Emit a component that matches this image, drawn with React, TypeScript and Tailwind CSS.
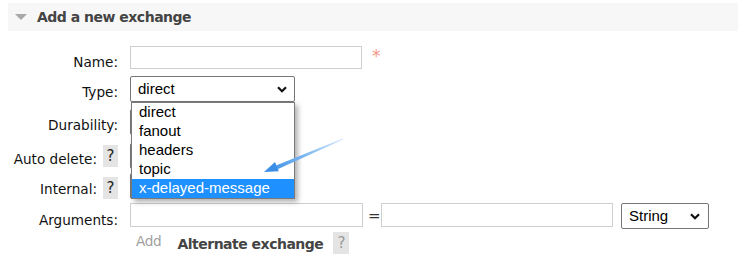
import React from "react";

const options = ["direct", "fanout", "headers", "topic", "x-delayed-message"];

function Chevron() {
  return (
    <svg width="10" height="7" viewBox="0 0 10 7" className="shrink-0">
      <path d="M1 1.2 L5 5.2 L9 1.2" fill="none" stroke="#111" strokeWidth="2.2" />
    </svg>
  );
}

function Help({ mt }: { mt: string }) {
  return (
    <span
      className={`${mt} ml-[6px] w-[15px] h-[22px] bg-[#e4e4e4] text-[#222] flex items-center justify-center text-[15px] leading-none`}
    >
      ?
    </span>
  );
}

export default function App() {
  return (
    <div
      className="relative w-[738px] h-[259px] overflow-hidden bg-white text-[#111] text-[13.6px]"
      style={{ fontFamily: '"DejaVu Sans", Verdana, sans-serif' }}
    >
      {/* section header */}
      <div className="mt-[3px] ml-[8px] h-[28px] bg-[#f7f7f7] flex items-center pl-[7px]">
        <svg width="12" height="6" viewBox="0 0 12 6">
          <path d="M0 0 L12 0 L6 6 Z" fill="#a8a8a8" />
        </svg>
        <h2 className="ml-[10px] text-[14px] font-bold tracking-[-0.5px] text-[#444] leading-none">
          Add a new exchange
        </h2>
      </div>

      <div className="pt-[15px]">
        {/* Name */}
        <div className="flex h-[30px] items-start">
          <div className="w-[118px] text-right leading-[20px] mt-[6px]">Name:</div>
          <div className="ml-[12px] w-[232px] h-[23px] border border-[#cfcfcf] bg-white" />
          <span className="ml-[10px] mt-[2px] text-[17px] leading-none text-[#f4988a]">*</span>
        </div>

        {/* Type */}
        <div className="flex h-[33px] items-start relative z-10">
          <div className="w-[118px] text-right leading-[20px] mt-[6px]">Type:</div>
          <div className="relative ml-[12px]">
            <div
              className="w-[165px] h-[26px] border border-[#767676] rounded-[2px] bg-white flex items-center justify-between pl-[7px] pr-[7px] text-[15px] text-black"
              style={{ fontFamily: '"Liberation Sans", Arial, sans-serif' }}
            >
              <span>direct</span>
              <Chevron />
            </div>
            <div
              className="absolute left-[1px] top-[26px] w-[164px] border border-[#7a7a7a] bg-white shadow-[3px_3px_5px_rgba(0,0,0,0.3)] text-[15px]"
              style={{ fontFamily: '"Liberation Sans", Arial, sans-serif' }}
            >
              {options.map((o) => (
                <div
                  key={o}
                  className={`h-[19px] leading-[18px] pl-[7px] ${
                    o === "x-delayed-message" ? "bg-[#1e90ff] text-white" : "text-black"
                  }`}
                >
                  {o}
                </div>
              ))}
            </div>
          </div>
        </div>

        {/* Durability */}
        <div className="flex h-[34px] items-start">
          <div className="w-[118px] text-right leading-[20px] mt-[6px]">Durability:</div>
          <div className="ml-[12px] w-[90px] h-[26px] border border-[#767676] rounded-[2px] bg-white" />
        </div>

        {/* Auto delete */}
        <div className="flex h-[30px] items-start">
          <div className="w-[118px] flex justify-end items-start">
            <span className="leading-[20px] mt-[6px]">Auto delete:</span>
            <Help mt="mt-[2px]" />
          </div>
          <div className="ml-[12px] w-[90px] h-[26px] border border-[#767676] rounded-[2px] bg-white" />
        </div>

        {/* Internal */}
        <div className="flex h-[30px] items-start">
          <div className="w-[118px] flex justify-end items-start">
            <span className="leading-[20px] mt-[6px]">Internal:</span>
            <Help mt="mt-[4px]" />
          </div>
          <div className="ml-[12px] w-[90px] h-[26px] border border-[#767676] rounded-[2px] bg-white" />
        </div>

        {/* Arguments */}
        <div className="flex h-[28px] items-start">
          <div className="w-[118px] text-right leading-[20px] mt-[7px]">Arguments:</div>
          <div className="ml-[12px] w-[233px] h-[24px] border border-[#cfcfcf] bg-white" />
          <span className="ml-[5px] w-[9px] mt-[3px] text-[15px] text-[#333] leading-[20px]">=</span>
          <div className="ml-[4px] w-[232px] h-[24px] border border-[#cfcfcf] bg-white" />
          <div
            className="ml-[8px] w-[88px] h-[26px] border border-[#767676] rounded-[2px] bg-white flex items-center justify-between pl-[7px] pr-[8px] text-[15px] text-black"
            style={{ fontFamily: '"Liberation Sans", Arial, sans-serif' }}
          >
            <span>String</span>
            <Chevron />
          </div>
        </div>

        {/* Add / Alternate exchange */}
        <div className="flex items-start pl-[136px]">
          <span className="leading-[20px] text-[#a0a0a0] tracking-[-0.3px]">Add</span>
          <span className="ml-[16px] mt-[3px] leading-[20px] text-[14px] font-bold tracking-[-0.5px] text-[#444]">
            Alternate exchange
          </span>
          <span className="ml-[10px] mt-[1px] w-[16px] h-[22px] bg-[#e4e4e4] text-[#999] text-[15px] flex items-center justify-center leading-none">
            ?
          </span>
        </div>
      </div>

      {/* annotation arrow */}
      <svg className="absolute inset-0 pointer-events-none z-20" width="738" height="259">
        <defs>
          <linearGradient id="arr" x1="343" y1="139" x2="265" y2="172" gradientUnits="userSpaceOnUse">
            <stop offset="0" stopColor="#d6eafc" />
            <stop offset="0.5" stopColor="#7ab6f0" />
            <stop offset="1" stopColor="#3a8ee6" />
          </linearGradient>
        </defs>
        <polygon points="343.2,139.5 342.8,138.5 276,165.4 277.6,169.2" fill="url(#arr)" />
        <polygon points="264,172 275,162 278.8,171.2" fill="#3a8ee6" />
      </svg>
    </div>
  );
}
